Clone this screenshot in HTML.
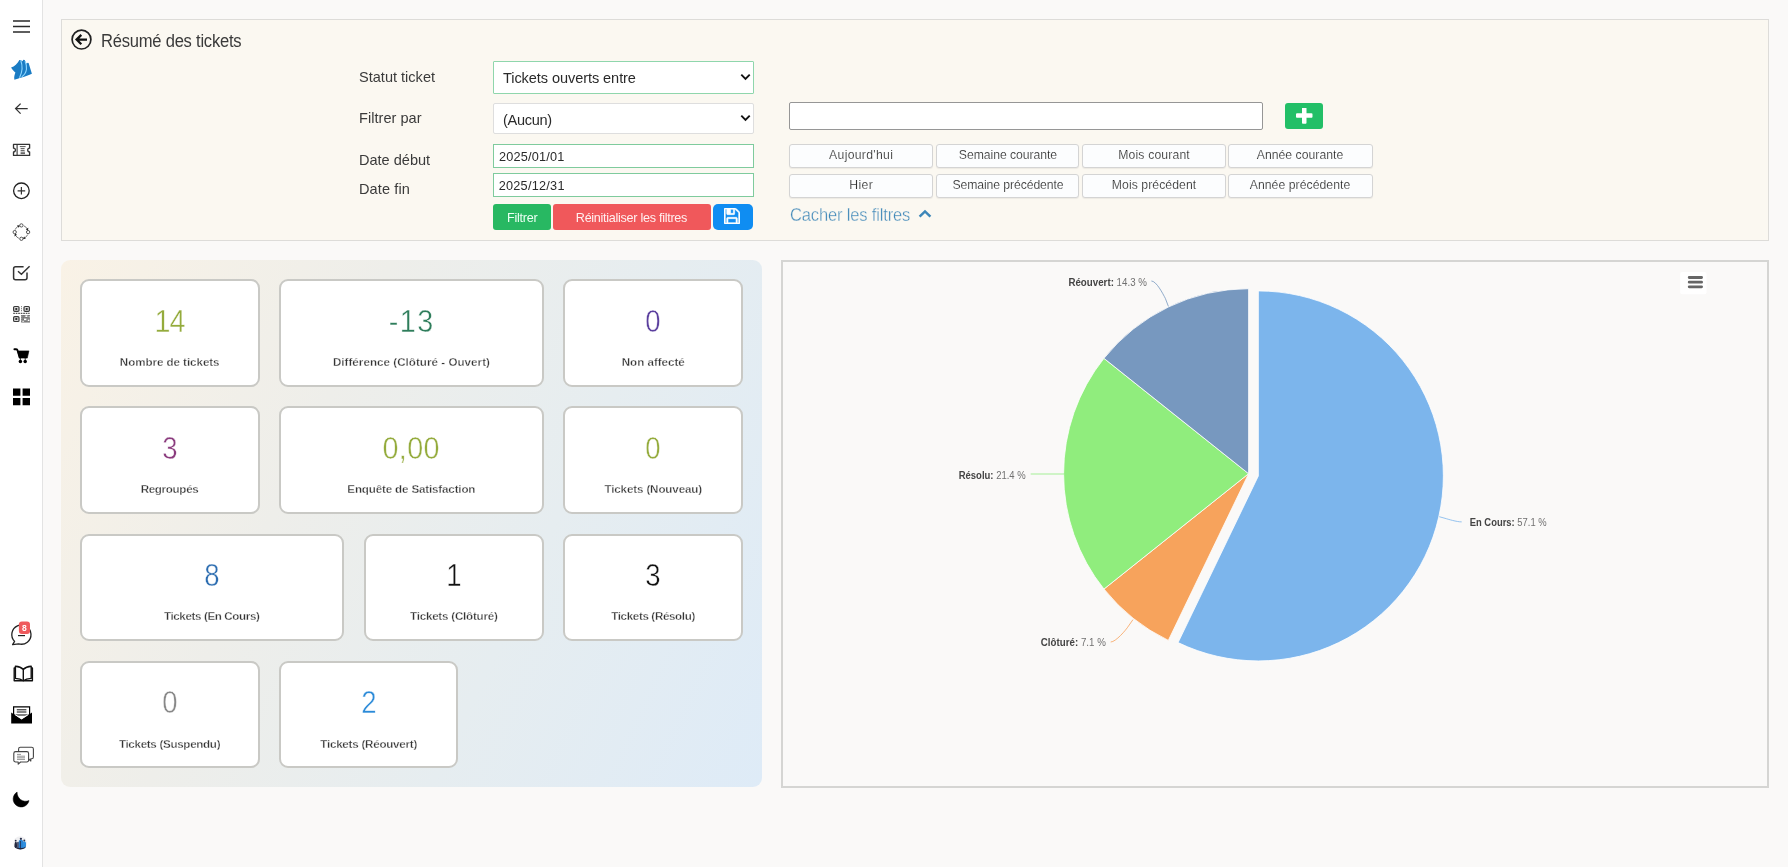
<!DOCTYPE html>
<html lang="fr"><head><meta charset="utf-8"><title>Résumé des tickets</title>
<style>

*{box-sizing:border-box;margin:0;padding:0}
html,body{width:1788px;height:867px;overflow:hidden}
body{background:#faf9f8;font-family:"Liberation Sans",sans-serif;position:relative;color:#333}
#wrap{position:absolute;left:0;top:0;width:1788px;height:867px;will-change:transform}
.t{position:absolute;line-height:1;white-space:nowrap}
.abs{position:absolute}
#side{position:absolute;left:0;top:0;width:43px;height:867px;background:#fff;border-right:1px solid #e3e3e3}
#top{position:absolute;left:61px;top:19px;width:1708px;height:222px;background:#fbf8f1;border:1px solid #dddcd9}
.sel{position:absolute;background:#fff;border-radius:2px}
.inp{position:absolute;background:#fff}
.qb{position:absolute;height:23.4px;width:143.8px;background:#fcfdfe;border:1px solid #d4d4d4;border-radius:3px;box-shadow:0 1px 1px rgba(0,0,0,.06)}
.btn{position:absolute;border-radius:3px}
#cards{position:absolute;left:61px;top:260.2px;width:701px;height:527.3px;border-radius:9px;background:linear-gradient(115deg,#f9f2e6 0%,#eeeeea 35%,#e6edf0 65%,#deebf7 100%)}
.card{position:absolute;height:107.4px;background:#fff;border:2.3px solid #c9c9c5;border-radius:9px;margin:-0.2px 0 0 -0.3px}
#chart{position:absolute;left:781px;top:260.3px;width:988px;height:527.5px;border:2px solid #d5d5d3;background:#faf9f8}

</style></head><body><div id="wrap">
<div id="side"></div><svg class="abs" style="left:0;top:0" width="43" height="867" viewBox="0 0 43 867"><path d="M13 21H30M13 26.4H30M13 31.9H30" stroke="#2a2a2a" stroke-width="1.5"/><g><path d="M11.1 67.4 C14.5 66.6 17.6 63.6 19.4 59.9 L20.6 59.9 L22.4 61.2 L23.4 59.8 L24.6 60 L26.6 63.800 L27.600 62.800 L28.600 63 L31.900 73.800 C29 75.200 25 76.600 21.600 77.600 C19 78.400 16.400 79.200 14.400 79.700 C13.800 77.400 14.600 74.800 15.400 72.600 C13.800 71.200 12.200 69.400 11.100 67.400Z" fill="#1a7cc4"/><path d="M20.700 60.200C22.400 64.600 22.600 71.600 19.500 77.800" fill="none" stroke="#8fd8ff" stroke-width="1.100"/><path d="M25 61.200C27.400 66 27.600 72.600 21.800 76.800" fill="none" stroke="#8fd8ff" stroke-width="1.100"/></g><path d="M27.7 108.6H15.8M20.6 103.6L15.6 108.6L20.6 113.6" fill="none" stroke="#333" stroke-width="1.3"/><path d="M13.5 144.4H29.6V148.2A1.9 1.9 0 0 0 29.6 152V155.4H13.5V152A1.9 1.9 0 0 0 13.5 148.2Z" fill="none" stroke="#333" stroke-width="1.3" stroke-linejoin="round"/><path d="M17.1 144.4V155.4" stroke="#333" stroke-width="1.1"/><path d="M19.8 146.6H25.6M20.6 148.6H24.6M20.6 150.4H24.6M20.6 152.2H25M20.6 153.6H25" stroke="#444" stroke-width="0.9"/><circle cx="21.4" cy="190.8" r="7.8" fill="none" stroke="#222" stroke-width="1.3"/><path d="M17.6 190.8H25.2M21.4 187V194.6" stroke="#333" stroke-width="1.2"/><path d="M23.91 225.89A6.7 6.7 0 0 1 27.32 228.95M27.61 234.61A6.7 6.7 0 0 1 24.55 238.02M18.89 238.31A6.7 6.7 0 0 1 15.48 235.25M15.19 229.59A6.7 6.7 0 0 1 18.25 226.18" fill="none" stroke="#666" stroke-width="0.9"/><path d="M27.95 230.71L28.35 227.75L25.81 229.34ZM22.79 238.65L25.75 239.05L24.16 236.51ZM14.85 233.49L14.45 236.45L16.99 234.86ZM20.01 225.55L17.05 225.15L18.64 227.69Z" fill="#222"/><circle cx="21.40" cy="225.40" r="1.65" fill="#fff" stroke="#444" stroke-width="0.9"/><circle cx="28.10" cy="232.10" r="1.65" fill="#fff" stroke="#444" stroke-width="0.9"/><circle cx="21.40" cy="238.80" r="1.65" fill="#fff" stroke="#444" stroke-width="0.9"/><circle cx="14.70" cy="232.10" r="1.65" fill="#fff" stroke="#444" stroke-width="0.9"/><path d="M23.6 266.8H15.6A2 2 0 0 0 13.6 268.8V277.8A2 2 0 0 0 15.6 279.8H25A2 2 0 0 0 27 277.800V272.600" fill="none" stroke="#333" stroke-width="1.5"/><path d="M18 271.200L21.400 274.300L29.600 266.200" fill="none" stroke="#333" stroke-width="1.5"/><rect x="13.6" y="306.5" width="5.4" height="4.8" rx="1.1" fill="#d8d8d8" stroke="#3a3a3a" stroke-width="1.2"/><rect x="15.3" y="307.9" width="2" height="2" rx="0.4" fill="#333"/><rect x="24.0" y="306.5" width="5.4" height="4.8" rx="1.1" fill="#d8d8d8" stroke="#3a3a3a" stroke-width="1.2"/><rect x="25.7" y="307.9" width="2" height="2" rx="0.4" fill="#333"/><rect x="13.6" y="316.70000000000005" width="5.4" height="4.8" rx="1.1" fill="#d8d8d8" stroke="#3a3a3a" stroke-width="1.2"/><rect x="15.3" y="318.1" width="2" height="2" rx="0.4" fill="#333"/><path d="M21.500 306V311.800" stroke="#888" stroke-width="1" stroke-dasharray="1.300 0.700"/><path d="M13.200 313.400H29.600" stroke="#555" stroke-width="1.300" stroke-dasharray="1.700 0.800"/><rect x="21.200" y="315" width="8.800" height="7.600" fill="#8a8a8a"/><path d="M21.200 315.600H30M21.200 317.600H30M21.200 319.600H30M21.200 321.600H30" stroke="#666" stroke-width="0.700" stroke-dasharray="1.100 0.600"/><rect x="25.400" y="315.400" width="1.900" height="1.600" fill="#fff"/><rect x="24" y="318.600" width="2.400" height="1.500" fill="#fff"/><rect x="27.800" y="319.600" width="1.600" height="1.500" fill="#fff"/><rect x="22.400" y="320.800" width="1.500" height="1.100" fill="#eee"/><rect x="28.600" y="316.200" width="1.200" height="1.200" fill="#ddd"/><path d="M14.400 349.200H16.200C17 349.200 17.400 349.600 17.600 350.400L19.700 357.400" fill="none" stroke="#000" stroke-width="1.900" stroke-linecap="round" stroke-linejoin="round"/><path d="M17.600 350.900H28.900L27.300 358.100H19.500Z" fill="#000" stroke="#000" stroke-width="0.600" stroke-linejoin="round"/><path d="M20.400 358V360M25.200 358V360" stroke="#000" stroke-width="0.800"/><circle cx="20.400" cy="361.400" r="1.750" fill="#000"/><circle cx="25.200" cy="361.400" r="1.750" fill="#000"/><path d="M13 388.400h7.400v7.400H13z M22.600 388.400h7.400v7.400h-7.400z M13 398h7.400v7.200H13z M22.600 398h7.400v7.200h-7.400z" fill="#000"/><path d="M14.600 641.400A9.600 9.600 0 1 1 18.600 643.800L12.600 644.600Z" fill="none" stroke="#222" stroke-width="1.300" stroke-linejoin="round"/><path d="M18 635.600H25" stroke="#222" stroke-width="1.200"/><rect x="18.900" y="621.500" width="11.100" height="12.500" rx="3" fill="#ef5a5d"/><text x="24.450" y="631.200" font-family="Liberation Sans, sans-serif" font-size="8.500" font-weight="700" fill="#fff" text-anchor="middle">8</text><g fill="none" stroke="#111" stroke-width="1.400" stroke-linejoin="round"><path d="M23.300 669.400C21.400 667.400 18.400 666.400 15.400 666.200V678.400C18.400 678.600 21.400 679.400 23.300 680.800C25.200 679.400 28.200 678.600 31.200 678.400V666.200C28.200 666.400 25.200 667.400 23.300 669.400Z"/><path d="M23.300 669.400V680.800"/><path d="M15.400 668H14.200V680.800H32.400V668H31.200"/></g><path d="M13.600 706.900H29.600V715H13.600Z" fill="#fff" stroke="#000" stroke-width="1.200"/><path d="M16.800 709.800H26.400M16.800 712H26.400" stroke="#111" stroke-width="1"/><path d="M11.200 712.600L21.600 719.600L32 712.600V723.400H11.200Z" fill="#000"/><path d="M15 714.600L21.600 718.600L28.200 714.600" fill="none" stroke="#fff" stroke-width="1"/><g fill="#fff" stroke="#444" stroke-width="1.100" stroke-linejoin="round"><path d="M20.400 747.300H31.600A1.800 1.800 0 0 1 33.400 749.100V757A1.800 1.800 0 0 1 31.600 758.800H30.800V761L28.600 758.800H20.400A1.800 1.800 0 0 1 18.600 757V749.100A1.800 1.800 0 0 1 20.400 747.300Z"/><path d="M15.600 751.600H26.800A1.800 1.800 0 0 1 28.600 753.400V760.200A1.800 1.800 0 0 1 26.800 762H20.600L18.200 764.200V762H15.600A1.800 1.800 0 0 1 13.800 760.200V753.400A1.800 1.800 0 0 1 15.600 751.600Z"/></g><path d="M17 754.400H21M17 756.200H25M17 757.800H25M17 759.400H25" stroke="#888" stroke-width="0.900"/><path d="M17.100 792.100A8 8 0 1 0 29 800.600A8.650 8.650 0 0 1 17.100 792.100Z" fill="#000" stroke="#000" stroke-width="0.500" stroke-linejoin="round"/><circle cx="20.200" cy="843" r="6.800" fill="#f0f0f2"/><path d="M14.400 846.600C14.400 843.600 15 841.800 15.800 841.600C16.600 841.600 17 843 17 845V847.800C16 847.800 15 847.400 14.400 846.600Z" fill="#23283f"/><circle cx="15.700" cy="840.600" r="0.900" fill="#23283f"/><path d="M17.200 842.400C17.600 841.600 18.600 841.600 18.800 842.400V848.800C18.200 848.900 17.600 848.700 17.200 848.400Z" fill="#2b3352"/><path d="M18.800 840.800C19.800 839.400 22.200 839.400 23 840.800V848.600C21.600 849.400 20 849.400 18.800 848.800Z" fill="#2a86d6"/><circle cx="20.900" cy="838.800" r="1.150" fill="#27304d"/><path d="M20.400 841V848.800" stroke="#1d2c55" stroke-width="0.900"/><path d="M23 841.800C24.200 840.800 25.600 841.400 26 843V846.600C25.200 847.800 24.200 848.400 23 848.600Z" fill="#2f8fe0"/><circle cx="24.300" cy="840.400" r="0.950" fill="#27304d"/><path d="M14.800 846.200C17 848.400 23 849 25.800 846.400L25.200 848C22.400 850 17.400 849.800 14.800 847.600Z" fill="#1f2540"/></svg><div id="top"></div><svg class="abs" style="left:69px;top:27px" width="25" height="25" viewBox="0 0 25 25"><circle cx="12.5" cy="12.6" r="9.4" fill="none" stroke="#222" stroke-width="1.7"/><path d="M18 12.6H8.2M12.3 7.9L7.6 12.6L12.3 17.3" fill="none" stroke="#111" stroke-width="2.3" stroke-linecap="butt" stroke-linejoin="miter"/></svg><div class="t" style="top:32px;font-size:18.0px;color:#3a3a3a;letter-spacing:-0.25px;left:101.3px;transform:scaleX(0.92);transform-origin:0 0;">Résumé des tickets</div><div class="t" style="top:69px;font-size:15.0px;color:#3a3a3a;left:358.5px;transform:scaleX(0.97);transform-origin:0 0;">Statut ticket</div><div class="t" style="top:110px;font-size:15.0px;color:#3a3a3a;letter-spacing:0.03px;left:358.5px;transform:scaleX(0.97);transform-origin:0 0;">Filtrer par</div><div class="t" style="top:152px;font-size:15.0px;color:#3a3a3a;letter-spacing:-0.01px;left:358.5px;transform:scaleX(0.97);transform-origin:0 0;">Date début</div><div class="t" style="top:181px;font-size:15.0px;color:#3a3a3a;letter-spacing:0.1px;left:358.5px;transform:scaleX(0.97);transform-origin:0 0;">Date fin</div><div class="sel" style="left:493px;top:61.1px;width:261px;height:32.5px;border:1.6px solid #8fd6ac;border-radius:1px"></div><div class="t" style="top:70px;font-size:15.0px;color:#2a2a2a;letter-spacing:-0.08px;left:502.7px;transform:scaleX(0.97);transform-origin:0 0;">Tickets ouverts entre</div><svg class="abs" style="left:739.7px;top:73.2px" width="11" height="8" viewBox="0 0 11 8"><path d="M1.3 1.6L5.5 5.8L9.7 1.6" fill="none" stroke="#111" stroke-width="1.9"/></svg><div class="sel" style="left:493px;top:102.5px;width:261px;height:31.8px;border:1px solid #dedede"></div><div class="t" style="top:112px;font-size:15.0px;color:#2a2a2a;letter-spacing:-0.32px;left:502.9px;transform:scaleX(0.97);transform-origin:0 0;">(Aucun)</div><svg class="abs" style="left:739.7px;top:114.3px" width="11" height="8" viewBox="0 0 11 8"><path d="M1.3 1.6L5.5 5.8L9.7 1.6" fill="none" stroke="#111" stroke-width="1.9"/></svg><div class="inp" style="left:493px;top:144.4px;width:261px;height:23.3px;border:1.3px solid #7fcb9d"></div><div class="t" style="top:151px;font-size:12.7px;color:#2a2a2a;letter-spacing:0.21px;left:498.9px;">2025/01/01</div><div class="inp" style="left:493px;top:173.4px;width:261px;height:23.8px;border:1.3px solid #7fcb9d"></div><div class="t" style="top:180px;font-size:12.7px;color:#2a2a2a;letter-spacing:0.25px;left:498.7px;">2025/12/31</div><div class="btn" style="left:493.4px;top:204px;width:57.4px;height:26.1px;background:#28b862"></div><div class="t" style="top:212px;font-size:12.6px;color:#ecfff4;letter-spacing:-0.26px;left:372.3px;width:300px;text-align:center;text-indent:-0.26px;">Filtrer</div><div class="btn" style="left:553px;top:204px;width:157.7px;height:26.1px;background:#f0585b"></div><div class="t" style="top:212px;font-size:12.6px;color:#fff0f0;letter-spacing:-0.28px;left:481.6px;width:300px;text-align:center;text-indent:-0.28px;">Réinitialiser les filtres</div><div class="btn" style="left:712.5px;top:204px;width:40.5px;height:26.3px;background:#0f8df2;border-radius:5px"></div><svg class="abs" style="left:724px;top:208px" width="16" height="16" viewBox="128 128 1536 1536"><path fill="#fff" stroke="#f4fbff" stroke-width="56" d="M512 1536h768v-384h-768v384zm896 0h128v-896q0-14-10-38.500t-20-34.500l-281-281q-10-10-34-20t-39-10v416q0 40-28 68t-68 28h-576q-40 0-68-28t-28-68v-416h-128v1280h128v-416q0-40 28-68t68-28h832q40 0 68 28t28 68v416zm-384-928v-320q0-13-9.500-22.500t-22.500-9.500h-192q-13 0-22.500 9.500t-9.500 22.500v320q0 13 9.500 22.500t22.500 9.500h192q13 0 22.500-9.500t9.500-22.500zm640 32v928q0 40-28 68t-68 28h-1344q-40 0-68-28t-28-68v-1344q0-40 28-68t68-28h928q40 0 88 20t76 48l280 280q28 28 48 76t20 88z"/></svg><div class="inp" style="left:789.2px;top:102.2px;width:474.2px;height:27.5px;border:1px solid #969696;border-radius:2px"></div><div class="btn" style="left:1284.7px;top:102.7px;width:38.5px;height:26.5px;background:#22bf67"></div><svg class="abs" style="left:1296.2px;top:107.7px" width="16.5" height="16.5" viewBox="192 192 1408 1408"><path fill="#fff" d="M1600 736v192q0 40-28 68t-68 28h-416v416q0 40-28 68t-68 28h-192q-40 0-68-28t-28-68v-416h-416q-40 0-68-28t-28-68v-192q0-40 28-68t68-28h416v-416q0-40 28-68t68-28h192q40 0 68 28t28 68v416h416q40 0 68 28t28 68z"/></svg><div class="qb" style="left:789.4px;top:144.3px"></div><div class="t" style="top:149px;font-size:12.6px;color:#222;letter-spacing:0.32px;left:711.3px;width:300px;text-align:center;text-indent:0.32px;transform:scaleX(0.97);-webkit-text-stroke:0.2px #fcfdfe;">Aujourd'hui</div><div class="qb" style="left:935.7px;top:144.3px"></div><div class="t" style="top:149px;font-size:12.6px;color:#222;letter-spacing:-0.06px;left:857.6px;width:300px;text-align:center;text-indent:-0.06px;transform:scaleX(0.97);-webkit-text-stroke:0.2px #fcfdfe;">Semaine courante</div><div class="qb" style="left:1082.0px;top:144.3px"></div><div class="t" style="top:149px;font-size:12.6px;color:#222;letter-spacing:0.15px;left:1003.9px;width:300px;text-align:center;text-indent:0.15px;transform:scaleX(0.97);-webkit-text-stroke:0.2px #fcfdfe;">Mois courant</div><div class="qb" style="left:1228.3px;top:144.3px;width:144.4px"></div><div class="t" style="top:149px;font-size:12.6px;color:#222;letter-spacing:0.02px;left:1150.2px;width:300px;text-align:center;text-indent:0.02px;transform:scaleX(0.97);-webkit-text-stroke:0.2px #fcfdfe;">Année courante</div><div class="qb" style="left:789.4px;top:174.4px"></div><div class="t" style="top:179px;font-size:12.6px;color:#222;letter-spacing:0.43px;left:711.3px;width:300px;text-align:center;text-indent:0.43px;transform:scaleX(0.97);-webkit-text-stroke:0.2px #fcfdfe;">Hier</div><div class="qb" style="left:935.7px;top:174.4px"></div><div class="t" style="top:179px;font-size:12.6px;color:#222;letter-spacing:-0.09px;left:857.6px;width:300px;text-align:center;text-indent:-0.09px;transform:scaleX(0.97);-webkit-text-stroke:0.2px #fcfdfe;">Semaine précédente</div><div class="qb" style="left:1082.0px;top:174.4px"></div><div class="t" style="top:179px;font-size:12.6px;color:#222;letter-spacing:0.06px;left:1003.9px;width:300px;text-align:center;text-indent:0.06px;transform:scaleX(0.97);-webkit-text-stroke:0.2px #fcfdfe;">Mois précédent</div><div class="qb" style="left:1228.3px;top:174.4px;width:144.4px"></div><div class="t" style="top:179px;font-size:12.6px;color:#222;letter-spacing:0.05px;left:1150.2px;width:300px;text-align:center;text-indent:0.05px;transform:scaleX(0.97);-webkit-text-stroke:0.2px #fcfdfe;">Année précédente</div><div class="t" style="top:207px;font-size:17.6px;color:#4088b8;letter-spacing:-0.18px;left:789.8px;transform:scaleX(0.94);transform-origin:0 0;-webkit-text-stroke:0.35px #fbf8f1;">Cacher les filtres</div><svg class="abs" style="left:917.4px;top:207.6px" width="16" height="12" viewBox="0 0 16 12"><path d="M2.6 8.6L8 3.4L13.4 8.6" fill="none" stroke="#3d86b8" stroke-width="2.5"/></svg><div id="cards"></div><div class="card" style="left:80.0px;top:279.4px;width:179.8px"></div><div class="t" style="top:306px;font-size:30.6px;color:#94ab3c;letter-spacing:-1.06px;left:19.7px;width:300px;text-align:center;text-indent:-1.06px;transform:scaleX(0.94);-webkit-text-stroke:0.45px #fff;">14</div><div class="t" style="top:356px;font-size:11.6px;color:#333;font-weight:700;letter-spacing:-0.05px;left:19.7px;width:300px;text-align:center;text-indent:-0.05px;-webkit-text-stroke:0.3px #fff;">Nombre de tickets</div><div class="card" style="left:279.3px;top:279.4px;width:264.6px"></div><div class="t" style="top:306px;font-size:30.6px;color:#2e7d5b;letter-spacing:1.66px;left:261.4px;width:300px;text-align:center;text-indent:1.66px;transform:scaleX(0.94);-webkit-text-stroke:0.45px #fff;">-13</div><div class="t" style="top:356px;font-size:11.6px;color:#333;font-weight:700;letter-spacing:0.04px;left:261.4px;width:300px;text-align:center;text-indent:0.04px;-webkit-text-stroke:0.3px #fff;">Différence (Clôturé - Ouvert)</div><div class="card" style="left:563.6px;top:279.4px;width:179.7px"></div><div class="t" style="top:306px;font-size:30.6px;color:#5b3f9e;left:503.25px;width:300px;text-align:center;transform:scaleX(0.9);-webkit-text-stroke:0.45px #fff;">0</div><div class="t" style="top:356px;font-size:11.6px;color:#333;font-weight:700;left:503.25px;width:300px;text-align:center;-webkit-text-stroke:0.3px #fff;">Non affecté</div><div class="card" style="left:80.0px;top:406.6px;width:179.8px"></div><div class="t" style="top:433px;font-size:30.6px;color:#8a3a7d;left:19.7px;width:300px;text-align:center;transform:scaleX(0.9);-webkit-text-stroke:0.45px #fff;">3</div><div class="t" style="top:483px;font-size:11.6px;color:#333;font-weight:700;letter-spacing:-0.31px;left:19.7px;width:300px;text-align:center;text-indent:-0.31px;-webkit-text-stroke:0.3px #fff;">Regroupés</div><div class="card" style="left:279.3px;top:406.6px;width:264.6px"></div><div class="t" style="top:433px;font-size:30.6px;color:#94ab3c;letter-spacing:0.4px;left:261.4px;width:300px;text-align:center;text-indent:0.4px;transform:scaleX(0.94);-webkit-text-stroke:0.45px #fff;">0,00</div><div class="t" style="top:483px;font-size:11.6px;color:#333;font-weight:700;letter-spacing:-0.15px;left:261.4px;width:300px;text-align:center;text-indent:-0.15px;-webkit-text-stroke:0.3px #fff;">Enquête de Satisfaction</div><div class="card" style="left:563.6px;top:406.6px;width:179.7px"></div><div class="t" style="top:433px;font-size:30.6px;color:#94ab3c;left:503.25px;width:300px;text-align:center;transform:scaleX(0.9);-webkit-text-stroke:0.45px #fff;">0</div><div class="t" style="top:483px;font-size:11.6px;color:#333;font-weight:700;letter-spacing:-0.12px;left:503.25px;width:300px;text-align:center;text-indent:-0.12px;-webkit-text-stroke:0.3px #fff;">Tickets (Nouveau)</div><div class="card" style="left:80.0px;top:533.8px;width:264.2px"></div><div class="t" style="top:560px;font-size:30.6px;color:#2b6cb0;left:61.9px;width:300px;text-align:center;transform:scaleX(0.9);-webkit-text-stroke:0.45px #fff;">8</div><div class="t" style="top:610px;font-size:11.6px;color:#333;font-weight:700;letter-spacing:-0.37px;left:61.9px;width:300px;text-align:center;text-indent:-0.37px;-webkit-text-stroke:0.3px #fff;">Tickets (En Cours)</div><div class="card" style="left:364.3px;top:533.8px;width:179.7px"></div><div class="t" style="top:560px;font-size:30.6px;color:#111;left:303.95px;width:300px;text-align:center;transform:scaleX(0.9);-webkit-text-stroke:0.45px #fff;">1</div><div class="t" style="top:610px;font-size:11.6px;color:#333;font-weight:700;letter-spacing:-0.21px;left:303.95px;width:300px;text-align:center;text-indent:-0.21px;-webkit-text-stroke:0.3px #fff;">Tickets (Clôturé)</div><div class="card" style="left:563.6px;top:533.8px;width:179.7px"></div><div class="t" style="top:560px;font-size:30.6px;color:#111;left:503.25px;width:300px;text-align:center;transform:scaleX(0.9);-webkit-text-stroke:0.45px #fff;">3</div><div class="t" style="top:610px;font-size:11.6px;color:#333;font-weight:700;letter-spacing:-0.35px;left:503.25px;width:300px;text-align:center;text-indent:-0.35px;-webkit-text-stroke:0.3px #fff;">Tickets (Résolu)</div><div class="card" style="left:80.0px;top:661.0px;width:179.8px"></div><div class="t" style="top:687px;font-size:30.6px;color:#888;left:19.7px;width:300px;text-align:center;transform:scaleX(0.9);-webkit-text-stroke:0.45px #fff;">0</div><div class="t" style="top:738px;font-size:11.6px;color:#333;font-weight:700;letter-spacing:-0.3px;left:19.7px;width:300px;text-align:center;text-indent:-0.3px;-webkit-text-stroke:0.3px #fff;">Tickets (Suspendu)</div><div class="card" style="left:279.3px;top:661.0px;width:179.4px"></div><div class="t" style="top:687px;font-size:30.6px;color:#2a8ad8;left:218.8px;width:300px;text-align:center;transform:scaleX(0.9);-webkit-text-stroke:0.45px #fff;">2</div><div class="t" style="top:738px;font-size:11.6px;color:#333;font-weight:700;letter-spacing:-0.23px;left:218.8px;width:300px;text-align:center;text-indent:-0.23px;-webkit-text-stroke:0.3px #fff;">Tickets (Réouvert)</div><div id="chart"></div><svg class="abs" style="left:781px;top:260px" width="988" height="528" viewBox="781 260 988 528"><path d="M1258.35 475.93L1258.35 290.93A185.0 185.0 0 1 1 1178.08 642.60Z" fill="#7cb5ec" stroke="#ffffff" stroke-width="0.8" stroke-linejoin="round"/><path d="M1248.60 473.70L1168.33 640.38A185.0 185.0 0 0 1 1103.96 589.05Z" fill="#f7a35c" stroke="#ffffff" stroke-width="0.8" stroke-linejoin="round"/><path d="M1248.60 473.70L1103.96 589.05A185.0 185.0 0 0 1 1103.96 358.35Z" fill="#90ed7d" stroke="#ffffff" stroke-width="0.8" stroke-linejoin="round"/><path d="M1248.60 473.70L1103.96 358.35A185.0 185.0 0 0 1 1248.60 288.70Z" fill="#7798bf" stroke="#ffffff" stroke-width="0.8" stroke-linejoin="round"/><path d="M1151.4 281 C1156.4 281 1163 294 1165.3 298.3 L1168.4 306.4" fill="none" stroke="#7798bf" stroke-width="1" stroke-opacity="0.8"/><path d="M1030.7 474 L1064 474" fill="none" stroke="#90ed7d" stroke-width="1" stroke-opacity="0.8"/><path d="M1110.7 642 C1115.7 642 1126 630 1128.5 626 L1133 619.6" fill="none" stroke="#f7a35c" stroke-width="1" stroke-opacity="0.8"/><path d="M1461.7 521.9 C1456.7 521.9 1448 519.2 1445 518.3 L1439.2 516.7" fill="none" stroke="#7cb5ec" stroke-width="1" stroke-opacity="0.8"/><text transform="translate(1068.4 286) scale(0.8853 1)" font-family="Liberation Sans, sans-serif" font-size="11.0" fill="#707070" textLength="88.7" lengthAdjust="spacing"><tspan font-weight="700" fill="#444">Réouvert:</tspan> 14.3 %</text><text transform="translate(958.7 479.3) scale(0.8641 1)" font-family="Liberation Sans, sans-serif" font-size="11.0" fill="#707070" textLength="77.6" lengthAdjust="spacing"><tspan font-weight="700" fill="#444">Résolu:</tspan> 21.4 %</text><text transform="translate(1040.8 645.8) scale(0.8859 1)" font-family="Liberation Sans, sans-serif" font-size="11.0" fill="#707070" textLength="73.4" lengthAdjust="spacing"><tspan font-weight="700" fill="#444">Clôturé:</tspan> 7.1 %</text><text transform="translate(1469.7 526.2) scale(0.8557 1)" font-family="Liberation Sans, sans-serif" font-size="11.0" fill="#707070" textLength="89.9" lengthAdjust="spacing"><tspan font-weight="700" fill="#444">En Cours:</tspan> 57.1 %</text><rect x="1680.2" y="272" width="26.3" height="22.3" rx="2" fill="#fff"/><path d="M1689.2 277.5H1701.6M1689.2 282.2H1701.6M1689.2 286.8H1701.6" stroke="#666" stroke-width="2.8" stroke-linecap="round"/></svg>
</div></body></html>
